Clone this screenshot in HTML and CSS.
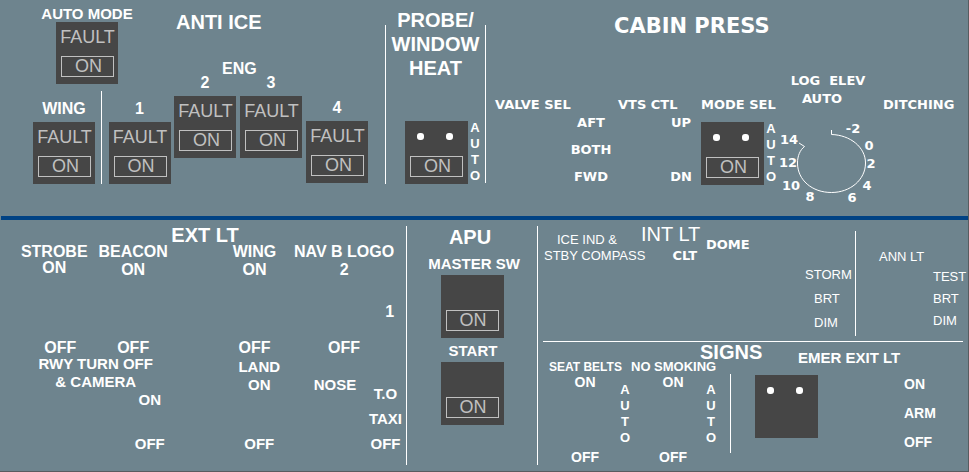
FILE: index.html
```html
<!DOCTYPE html>
<html lang="en">
<head>
<meta charset="utf-8">
<title>Overhead panel</title>
<link rel="stylesheet" href="styles.css">
</head>
<body>
<main class="overhead">
  <div class="upper">
    <section class="anti-ice">
      <div class="unit auto-mode">
        <span class="label small">AUTO MODE</span>
        <button class="switch"><span class="lamp">FAULT</span><span class="frame">ON</span></button>
      </div>
      <div class="anti-ice-head">
        <h2 class="title">ANTI ICE</h2>
        <span class="label eng">ENG</span>
      </div>
      <div class="unit wing">
        <span class="label">WING</span>
        <button class="switch"><span class="lamp">FAULT</span><span class="frame">ON</span></button>
      </div>
      <div class="unit engine-1">
        <span class="label">1</span>
        <button class="switch"><span class="lamp">FAULT</span><span class="frame">ON</span></button>
      </div>
      <div class="unit engine-2">
        <span class="label">2</span>
        <button class="switch"><span class="lamp">FAULT</span><span class="frame">ON</span></button>
      </div>
      <div class="unit engine-3">
        <span class="label">3</span>
        <button class="switch"><span class="lamp">FAULT</span><span class="frame">ON</span></button>
      </div>
      <div class="unit engine-4">
        <span class="label">4</span>
        <button class="switch"><span class="lamp">FAULT</span><span class="frame">ON</span></button>
      </div>
    </section>

    <section class="probe">
      <h2 class="title">PROBE/<br>WINDOW<br>HEAT</h2>
      <div class="switch-row">
        <button class="switch plain"><span class="dots"><i></i><i></i></span><span class="frame">ON</span></button>
        <span class="stack"><span>A</span><span>U</span><span>T</span><span>O</span></span>
      </div>
    </section>

    <section class="cabin">
      <h2 class="heavy-title">CABIN PRESS</h2>
      <div class="cabin-grid">
        <div class="selector valve">
          <span class="heavy">VALVE SEL</span>
          <ul class="positions"><li>AFT</li><li>BOTH</li><li>FWD</li></ul>
        </div>
        <div class="selector vts">
          <span class="heavy">VTS CTL</span>
          <ul class="positions"><li>UP</li><li>DN</li></ul>
        </div>
        <div class="selector mode">
          <span class="heavy">MODE SEL</span>
          <div class="switch-row">
            <button class="switch plain"><span class="dots"><i></i><i></i></span><span class="frame">ON</span></button>
            <span class="stack"><span>A</span><span>U</span><span>T</span><span>O</span></span>
          </div>
        </div>
        <div class="elevation">
          <span class="heavy elevation-label">LOG&nbsp; ELEV</span>
          <span class="heavy elevation-auto">AUTO</span>
          <svg class="dial" viewBox="0 0 100 88">
            <path d="M51.500 12V16.500C70 17 85.500 29 85.500 45C85.500 62 70 74.500 51.500 74.500C32 74.500 17.500 62 17.500 45C17.500 38 20 32 24.500 28.500L19 25"/>
            <text x="73" y="15">-2</text>
            <text x="89" y="32">0</text>
            <text x="91" y="50">2</text>
            <text x="87" y="72">4</text>
            <text x="72" y="84">6</text>
            <text x="30" y="83">8</text>
            <text x="11" y="72">10</text>
            <text x="8" y="49">12</text>
            <text x="9" y="26">14</text>
          </svg>
        </div>
        <div class="selector ditching"><span class="heavy">DITCHING</span></div>
      </div>
    </section>
  </div>

  <hr class="band">

  <div class="lower">
    <section class="exterior">
      <h2 class="title">EXT LT</h2>
      <div class="lights">
        <div class="light strobe"><span>STROBE</span><span>ON</span><span class="last">OFF</span></div>
        <div class="light beacon"><span>BEACON</span><span>ON</span><span class="last">OFF</span></div>
        <div class="light wing-light"><span>WING</span><span>ON</span><span class="last">OFF</span></div>
        <div class="light nav"><span>NAV B LOGO</span><span>2</span><span class="one">1</span><span class="after-one">OFF</span></div>
      </div>
      <div class="ground">
        <div class="light runway"><span>RWY TURN OFF</span><span>&amp; CAMERA</span><span class="offset">ON</span><span class="offset last">OFF</span></div>
        <div class="light land"><span>LAND</span><span>ON</span><span class="last">OFF</span></div>
        <div class="light nose"><span>NOSE</span></div>
        <div class="light taxi"><span>T.O</span><span>TAXI</span><span>OFF</span></div>
      </div>
    </section>

    <section class="apu">
      <h2 class="title">APU</h2>
      <span class="label small master">MASTER SW</span>
      <button class="switch plain"><span class="lamp"></span><span class="frame">ON</span></button>
      <span class="label small start">START</span>
      <button class="switch plain"><span class="lamp"></span><span class="frame">ON</span></button>
    </section>

    <section class="right">
      <div class="interior">
        <div class="compass"><span class="ice">ICE IND &amp;</span><span>STBY COMPASS</span></div>
        <div class="interior-head">
          <h2 class="thin-title">INT LT</h2>
          <span class="heavy">CLT</span>
        </div>
        <span class="heavy dome">DOME</span>
        <ul class="dimmer"><li class="storm">STORM</li><li>BRT</li><li>DIM</li></ul>
        <div class="annunciator">
          <span>ANN LT</span>
          <ul><li>TEST</li><li>BRT</li><li>DIM</li></ul>
        </div>
      </div>
      <hr class="rule">
      <div class="signs">
        <h2 class="title">SIGNS</h2>
        <span class="sign-label seat-label">SEAT BELTS</span>
        <span class="sign-label smoke-label">NO SMOKING</span>
        <span class="label small exit-label">EMER EXIT LT</span>
        <div class="sign seat">
          <div class="ends"><span>ON</span><span>OFF</span></div>
          <span class="stack"><span>A</span><span>U</span><span>T</span><span>O</span></span>
        </div>
        <div class="sign smoke">
          <div class="ends"><span>ON</span><span>OFF</span></div>
          <span class="stack"><span>A</span><span>U</span><span>T</span><span>O</span></span>
        </div>
        <div class="exit">
          <button class="switch plain" aria-label="EMER EXIT LT"><span class="dots"><i></i><i></i></span></button>
          <ul><li>ON</li><li>ARM</li><li>OFF</li></ul>
        </div>
      </div>
    </section>
  </div>
</main>
</body>
</html>
```
FILE: styles.css
```css
* { box-sizing: border-box; }

body {
  margin: 0;
  background: #6e848e;
  color: #fff;
  font-family: "Liberation Sans", Arial, sans-serif;
  font-size: 15px;
  line-height: 16px;
  white-space: nowrap;
}

h2, ul { margin: 0; padding: 0; }
ul { list-style: none; }

.overhead {
  min-height: 100vh;
  border-right: 1px solid #585c60;
  border-bottom: 1px solid #585c60;
}

.title { font-size: 20px; line-height: 24px; font-weight: bold; }
.label { font-size: 16px; line-height: 18px; font-weight: bold; }
.label.small { font-size: 15px; line-height: 16px; }
.heavy, .positions {
  font-family: "DejaVu Sans", Verdana, sans-serif;
  font-size: 13px;
  line-height: 18px;
  font-weight: bold;
}
.heavy-title {
  font-family: "DejaVu Sans", Verdana, sans-serif;
  font-size: 21px;
  line-height: 24px;
}

/* Push-button switches */
.switch {
  display: flex;
  flex-direction: column;
  justify-content: space-between;
  flex: none;
  width: 62px;
  height: 62px;
  margin: 0;
  padding: 5px 4px 7px 5px;
  border: 0;
  background: #464646;
  color: #c0c0c0;
  font: 18px/20px "Liberation Sans", Arial, sans-serif;
}
.switch.plain { width: 63px; height: 63px; padding-right: 5px; }
.lamp { height: 20px; text-align: center; align-self: center; }
.frame {
  align-self: stretch;
  height: 21px;
  padding-left: 2px;
  border: 1px solid #c0c0c0;
  line-height: 18px;
  text-align: center;
}
.dots { display: flex; gap: 22px; align-self: stretch; padding: 7px 7px 0; }
.dots i { width: 7px; height: 7px; border-radius: 3px; background: #fff; }
.switch-row { display: flex; align-items: center; gap: 2px; }
.stack {
  display: flex;
  flex-direction: column;
  width: 10px;
  font-size: 13px;
  font-weight: bold;
  text-align: center;
}

/* Upper half */
.upper { display: grid; grid-template-columns: 385fr 100fr 483fr; }

.anti-ice {
  display: grid;
  grid-template-columns: 101fr 73fr 62fr 70fr 62fr 17fr;
  grid-template-rows: 74px 17px auto;
  align-items: start;
}
.unit { display: flex; flex-direction: column; align-items: center; gap: 4px; }
.auto-mode { grid-column: 1 / 3; grid-row: 1 / 3; gap: 0; padding-top: 6px; }
.anti-ice-head { grid-column: 3 / 7; grid-row: 1; padding: 10px 0 0 2px; }
.eng { display: block; margin-top: 26px; padding-left: 46px; }
.wing { grid-column: 1; grid-row: 3; padding: 9px 0 0 27px; }
.engine-1 { grid-column: 2; grid-row: 3; padding: 9px 0 0 3px; border-left: 1px solid #fff; }
.engine-2 { grid-column: 3; grid-row: 2 / 4; }
.engine-3 { grid-column: 4; grid-row: 2 / 4; }
.engine-4 { grid-column: 5; grid-row: 2 / 4; padding-top: 25px; }

.probe {
  align-self: start;
  margin-top: 25px;
  border-left: 1px solid #fff;
}
.probe .title { margin-top: -17px; text-align: center; }
.probe .switch-row { margin-top: 40px; padding-left: 19px; }

.cabin { padding: 14px 0 10px 1px; background: linear-gradient(#fff, #fff) 0 25px / 1px 158px no-repeat; }
.heavy-title { padding-left: 128px; }
.cabin-grid {
  display: grid;
  grid-template-columns: 126fr 84fr 84fr 100fr 88fr;
  margin-top: 34px;
}
.selector { padding-top: 24px; }
.selector > .heavy { display: block; }
.valve > .heavy { padding-left: 9px; }
.vts > .heavy { padding-left: 6px; }
.mode { padding-left: 5px; }
.mode .switch-row { margin-top: 7px; }
.ditching { padding-left: 3px; }
.positions { display: flex; flex-direction: column; gap: 9px; text-align: center; }
.valve .positions { padding-left: 84px; }
.vts .positions { gap: 36px; padding-left: 54px; }
.elevation { display: flex; flex-direction: column; align-items: center; }
.elevation-label { padding-right: 4px; }
.elevation-auto { padding-right: 16px; }
.dial { display: block; width: 100px; height: 88px; margin-top: 10px; overflow: visible; }
.dial path { fill: none; stroke: #fff; stroke-width: 1; }
.dial text {
  fill: #fff;
  font: bold 13px "DejaVu Sans", Verdana, sans-serif;
  text-anchor: middle;
}

.band { height: 4px; margin: 0 0 0 1px; border: 0; background: #004284; }

/* Lower half */
.lower { display: grid; grid-template-columns: 406fr 131fr 431fr; padding: 6px 0; }

.exterior { font-weight: bold; }
.exterior .title { padding-left: 4px; line-height: 18px; text-align: center; }
.lights {
  display: grid;
  grid-template-columns: 12fr 86fr 74fr 46fr 80fr 96fr 12fr;
  min-height: 112px;
  font-size: 16px;
}
.light { display: flex; flex-direction: column; align-items: center; gap: 2px; }
.last { margin-top: auto; }
.strobe { grid-column: 2; gap: 0; }
.strobe .last { padding-left: 12px; }
.beacon { grid-column: 3; }
.wing-light { grid-column: 5; }
.nav { grid-column: 6; }
.one { align-self: flex-end; margin-top: auto; }
.after-one { margin-top: 18px; }
.ground {
  display: grid;
  grid-template-columns: 24fr 144fr 50fr 84fr 68fr 32fr 4fr;
  height: 96px;
}
.runway { grid-column: 2; }
.offset { padding-left: 108px; }
.land { grid-column: 4; padding-top: 3px; }
.nose { grid-column: 5; padding-top: 21px; }
.taxi { grid-column: 6; padding-top: 30px; justify-content: space-between; }

.apu {
  display: flex;
  flex-direction: column;
  align-items: center;
  border-left: 1px solid #fff;
}
.apu .title { line-height: 22px; margin-bottom: 8px; padding-right: 4px; }
.apu .small { margin-bottom: 3px; }
.apu .master { padding-left: 4px; }
.apu .start { margin-top: 5px; padding-left: 2px; }

.right { border-left: 1px solid #fff; }
.interior {
  display: grid;
  grid-template-columns: 103fr 62fr 102fr 50fr 113fr;
  font-size: 13px;
}
.interior .heavy { line-height: 16px; }
.compass { display: flex; flex-direction: column; width: 0; padding: 6px 0 0 6px; }
.ice { padding-left: 13px; }
.interior-head { width: 56px; }
.thin-title { font-size: 20px; line-height: 16px; font-weight: normal; }
.interior-head .heavy { display: block; margin-top: 6px; text-align: right; }
.dome { padding: 11px 0 0 3px; }
.dimmer { display: flex; flex-direction: column; width: 0; gap: 8px; padding: 41px 0 0 9px; }
.storm { margin-left: -9px; }
.annunciator { margin: 5px 0; padding: 18px 0 7px 23px; border-left: 1px solid #fff; }
.annunciator ul { display: flex; flex-direction: column; width: 0; gap: 6px; margin-top: 4px; padding-left: 54px; }
.rule { height: 1px; margin: 0 5px; border: 0; background: #fff; }

.signs {
  display: grid;
  grid-template-columns: 92fr 100fr 238fr;
  grid-template-rows: 18px 14px 91px;
  font-weight: bold;
}
.signs .title { grid-column: 1 / 4; grid-row: 1; padding-left: 162px; line-height: 20px; }
.sign-label { grid-row: 2; line-height: 14px; }
.seat-label { grid-column: 1; padding-left: 11px; font-size: 12px; }
.smoke-label { grid-column: 2; padding-left: 1px; font-size: 13px; }
.exit-label { grid-column: 3; grid-row: 1 / 3; padding: 8px 0 0 68px; }
.sign { display: flex; grid-row: 3; font-size: 14px; }
.sign .stack { padding-top: 8px; }
.ends { display: flex; flex: 1; flex-direction: column; align-items: center; justify-content: space-between; }
.seat { padding-left: 12px; }
.smoke { padding: 0 14px 0 10px; }
.exit {
  display: flex;
  grid-column: 3;
  grid-row: 3;
  gap: 86px;
  margin-bottom: 12px;
  padding: 1px 0 0 24px;
  border-left: 1px solid #fff;
  font-size: 14px;
}
.exit ul { display: flex; flex-direction: column; gap: 13px; padding-top: 1px; }
```
